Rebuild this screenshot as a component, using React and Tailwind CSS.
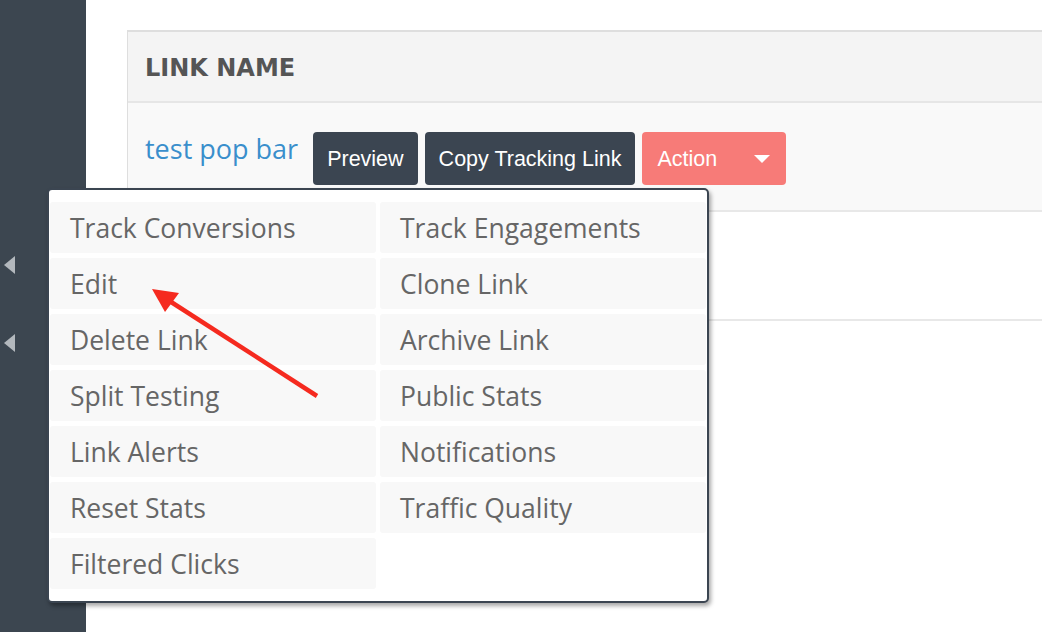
import React from 'react';

const LEFT_ITEMS = ['Track Conversions', 'Edit', 'Delete Link', 'Split Testing', 'Link Alerts', 'Reset Stats', 'Filtered Clicks'];
const RIGHT_ITEMS = ['Track Engagements', 'Clone Link', 'Archive Link', 'Public Stats', 'Notifications', 'Traffic Quality'];

// interleave so the grid fills row by row
const MENU = LEFT_ITEMS.map((l, i) => [l, RIGHT_ITEMS[i]]).flat();

const SideArrow = () => (
  <svg width="11" height="18" viewBox="0 0 11 18" className="ml-[4px]">
    <polygon points="11,0 11,18 0,9" fill="#b3b8bd" />
  </svg>
);

const App = () => {
  return (
    <div className="relative flex h-[632px] w-[1042px] overflow-hidden bg-white font-['Open_Sans',sans-serif]">
      {/* Sidebar */}
      <aside className="flex w-[86px] shrink-0 flex-col gap-[60px] bg-[#3c4650] pt-[256px]">
        <SideArrow />
        <SideArrow />
      </aside>

      {/* Main */}
      <main className="flex-1 pl-[41px] pt-[30px]">
        <div className="w-[1000px] border-l border-t-2 border-[#dedede]">
          <div className="flex h-[71px] items-center border-b-2 border-[#e6e6e6] bg-[#f4f4f4] pl-[17px] pt-[2px]">
            <span className="font-['DejaVu_Sans',sans-serif] text-[24px] font-bold text-[#555555]">LINK NAME</span>
          </div>
          <div className="flex h-[109px] items-start border-b-2 border-[#e8e8e8] bg-[#f9f9f9] pl-[17px] pt-[29px]">
            <a className="mr-[15px] mt-[-2px] text-[27px] leading-[38px] text-[#3a8fcc]">test pop bar</a>
            <div className="flex gap-[7px] font-['Liberation_Sans',sans-serif] text-[21.5px] text-white">
              <button className="h-[53px] rounded-[4px] bg-[#3b4551] px-[14px] pt-[2px]">Preview</button>
              <button className="h-[53px] rounded-[4px] bg-[#3b4551] px-[14px] pt-[2px]">Copy Tracking Link</button>
              <button className="flex h-[53px] w-[144px] items-center rounded-[4px] bg-[#f77b78] pl-[15px]">
                <span className="pt-[2px]">Action</span>
                <svg width="16" height="8" viewBox="0 0 16 8" className="ml-[37px]">
                  <polygon points="0,0 16,0 8,8" fill="#ffffff" />
                </svg>
              </button>
            </div>
          </div>
          <div className="h-[109px] border-b-2 border-[#e8e8e8] bg-white" />
        </div>
      </main>

      {/* Action dropdown */}
      <div className="absolute left-[47px] top-[188px] w-[662px] rounded-[5px] border-2 border-[#3b4551] bg-white px-[1px] py-[12px] shadow-[2px_3px_4px_rgba(0,0,0,0.35)]">
        <div className="grid grid-cols-2 gap-x-[4px] gap-y-[5px]">
          {MENU.map((item, i) =>
            item ? (
              <div key={i} className="flex h-[51px] items-center rounded-[3px] bg-[#f8f8f8] pl-[20px] pt-[3px] text-[26.5px] text-[#666666]">
                {item}
              </div>
            ) : (
              <div key={i} />
            )
          )}
        </div>
      </div>

      {/* Annotation arrow */}
      <svg className="pointer-events-none absolute left-0 top-0" width="1042" height="632">
        <line x1="317" y1="396" x2="168" y2="300" stroke="#f52a1f" strokeWidth="4.5" />
        <polygon points="152,289 179,293 165,312" fill="#f52a1f" />
      </svg>
    </div>
  );
};

export default App;
